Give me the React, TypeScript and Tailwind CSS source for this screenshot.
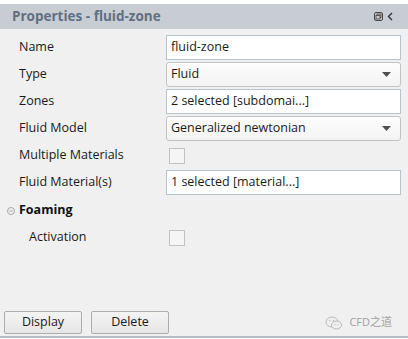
import React from "react";

const font = { fontFamily: '"Open Sans", "Noto Sans", "Noto Sans CJK SC", sans-serif' };

function Row({ label, indent, children }: { label: string; indent?: boolean; children: React.ReactNode }) {
  return (
    <div className="flex h-[27px] items-center">
      <div className={indent ? "w-[147px] pl-[10px] text-[12.5px] text-[#1a1a1a]" : "w-[147px] text-[12.5px] text-[#1a1a1a]"}>{label}</div>
      <div className="flex flex-1 items-center pr-[7px]">{children}</div>
    </div>
  );
}

function TextBox({ value }: { value: string }) {
  return (
    <div className="flex h-[25px] w-full items-center border border-[#b7c3cf] bg-white px-[4px] text-[12.5px] text-[#1a1a1a]">{value}</div>
  );
}

function Select({ value }: { value: string }) {
  return (
    <div className="flex h-[25px] w-full items-center justify-between rounded-[3px] border border-[#c3c3c3] bg-gradient-to-b from-[#fdfdfd] to-[#f3f3f3] px-[4px] text-[12.5px] text-[#1a1a1a]">
      <span>{value}</span>
      <svg width="9" height="5" viewBox="0 0 9 5" className="mr-[5px]">
        <path d="M0 0 H9 L4.5 5 Z" fill="#505050" />
      </svg>
    </div>
  );
}

function Check() {
  return <div className="ml-[3px] h-[16px] w-[16px] border border-[#c2c2c2] bg-[#f5f5f5]" />;
}

export default function App() {
  return (
    <div className="flex h-[339px] w-[408px] flex-col bg-white" style={font}>
      <div className="h-[4px]" />
      <div className="flex h-[25px] items-center justify-between bg-[#c8cdd3] pl-[12px] pr-[15px]">
        <span className="text-[13.5px] font-bold text-[#5f6f82]">Properties - fluid-zone</span>
        <div className="flex items-center gap-[4px]">
          <svg width="9" height="9" viewBox="0 0 9 9">
            <rect x="0.5" y="0.5" width="8" height="8" rx="1.5" fill="none" stroke="#4a4a4a" strokeWidth="1" />
            <rect x="3" y="2" width="4" height="3.5" fill="none" stroke="#4a4a4a" strokeWidth="0.9" />
            <rect x="2" y="3.5" width="4" height="3.5" fill="#c8cdd3" stroke="#4a4a4a" strokeWidth="0.9" />
          </svg>
          <svg width="6" height="9" viewBox="0 0 6 9">
            <path d="M5 1 L1.5 4.5 L5 8" fill="none" stroke="#333" strokeWidth="1.4" />
          </svg>
        </div>
      </div>
      <div className="flex flex-1 flex-col bg-[#f0f0f0]">
        <div className="flex flex-col pl-[19px] pt-[5px]">
          <Row label="Name"><TextBox value="fluid-zone" /></Row>
          <Row label="Type"><Select value="Fluid" /></Row>
          <Row label="Zones"><TextBox value="2 selected [subdomai...]" /></Row>
          <Row label="Fluid Model"><Select value="Generalized newtonian" /></Row>
          <Row label="Multiple Materials"><Check /></Row>
          <Row label="Fluid Material(s)"><TextBox value="1 selected [material...]" /></Row>
        </div>
        <div className="flex h-[28px] items-center pl-[7px] pt-[1px]">
          <svg width="8" height="8" viewBox="0 0 8 8" className="mr-[4px]">
            <circle cx="4" cy="4" r="3.5" fill="none" stroke="#a8a8a8" strokeWidth="1" />
            <path d="M2.3 4 H5.7" stroke="#a8a8a8" strokeWidth="1" />
          </svg>
          <span className="text-[12.5px] font-bold text-[#111]">Foaming</span>
        </div>
        <div className="pl-[19px]">
          <Row label="Activation" indent><Check /></Row>
        </div>
        <div className="flex-1" />
        <div className="flex items-center pb-[2px] pl-[4px] pr-[16px]">
          <button className="h-[23px] w-[78px] rounded-[2px] border border-[#adadad] bg-gradient-to-b from-[#f4f4f4] to-[#e6e6e6] text-[12.5px] text-[#1a1a1a]">Display</button>
          <button className="ml-[9px] h-[23px] w-[78px] rounded-[2px] border border-[#adadad] bg-gradient-to-b from-[#f4f4f4] to-[#e6e6e6] text-[12.5px] text-[#1a1a1a]">Delete</button>
          <div className="ml-auto flex items-center gap-[6px] text-[11px] text-[#a0a0a0]">
            <svg width="18" height="14" viewBox="0 0 18 14">
              <ellipse cx="7" cy="6" rx="6" ry="5" fill="none" stroke="#b8b8b8" strokeWidth="1" />
              <ellipse cx="11.5" cy="9" rx="5" ry="4" fill="#f0f0f0" stroke="#b8b8b8" strokeWidth="1" />
              <circle cx="4.8" cy="4.8" r="0.7" fill="#b8b8b8" />
              <circle cx="8.4" cy="4.8" r="0.7" fill="#b8b8b8" />
              <circle cx="10" cy="8.6" r="0.6" fill="#b8b8b8" />
              <circle cx="13" cy="8.6" r="0.6" fill="#b8b8b8" />
            </svg>
            <span>CFD之道</span>
          </div>
        </div>
      </div>
      <div className="h-[2px] bg-[#b5bdc6]" />
      <div className="h-[1px]" />
    </div>
  );
}
